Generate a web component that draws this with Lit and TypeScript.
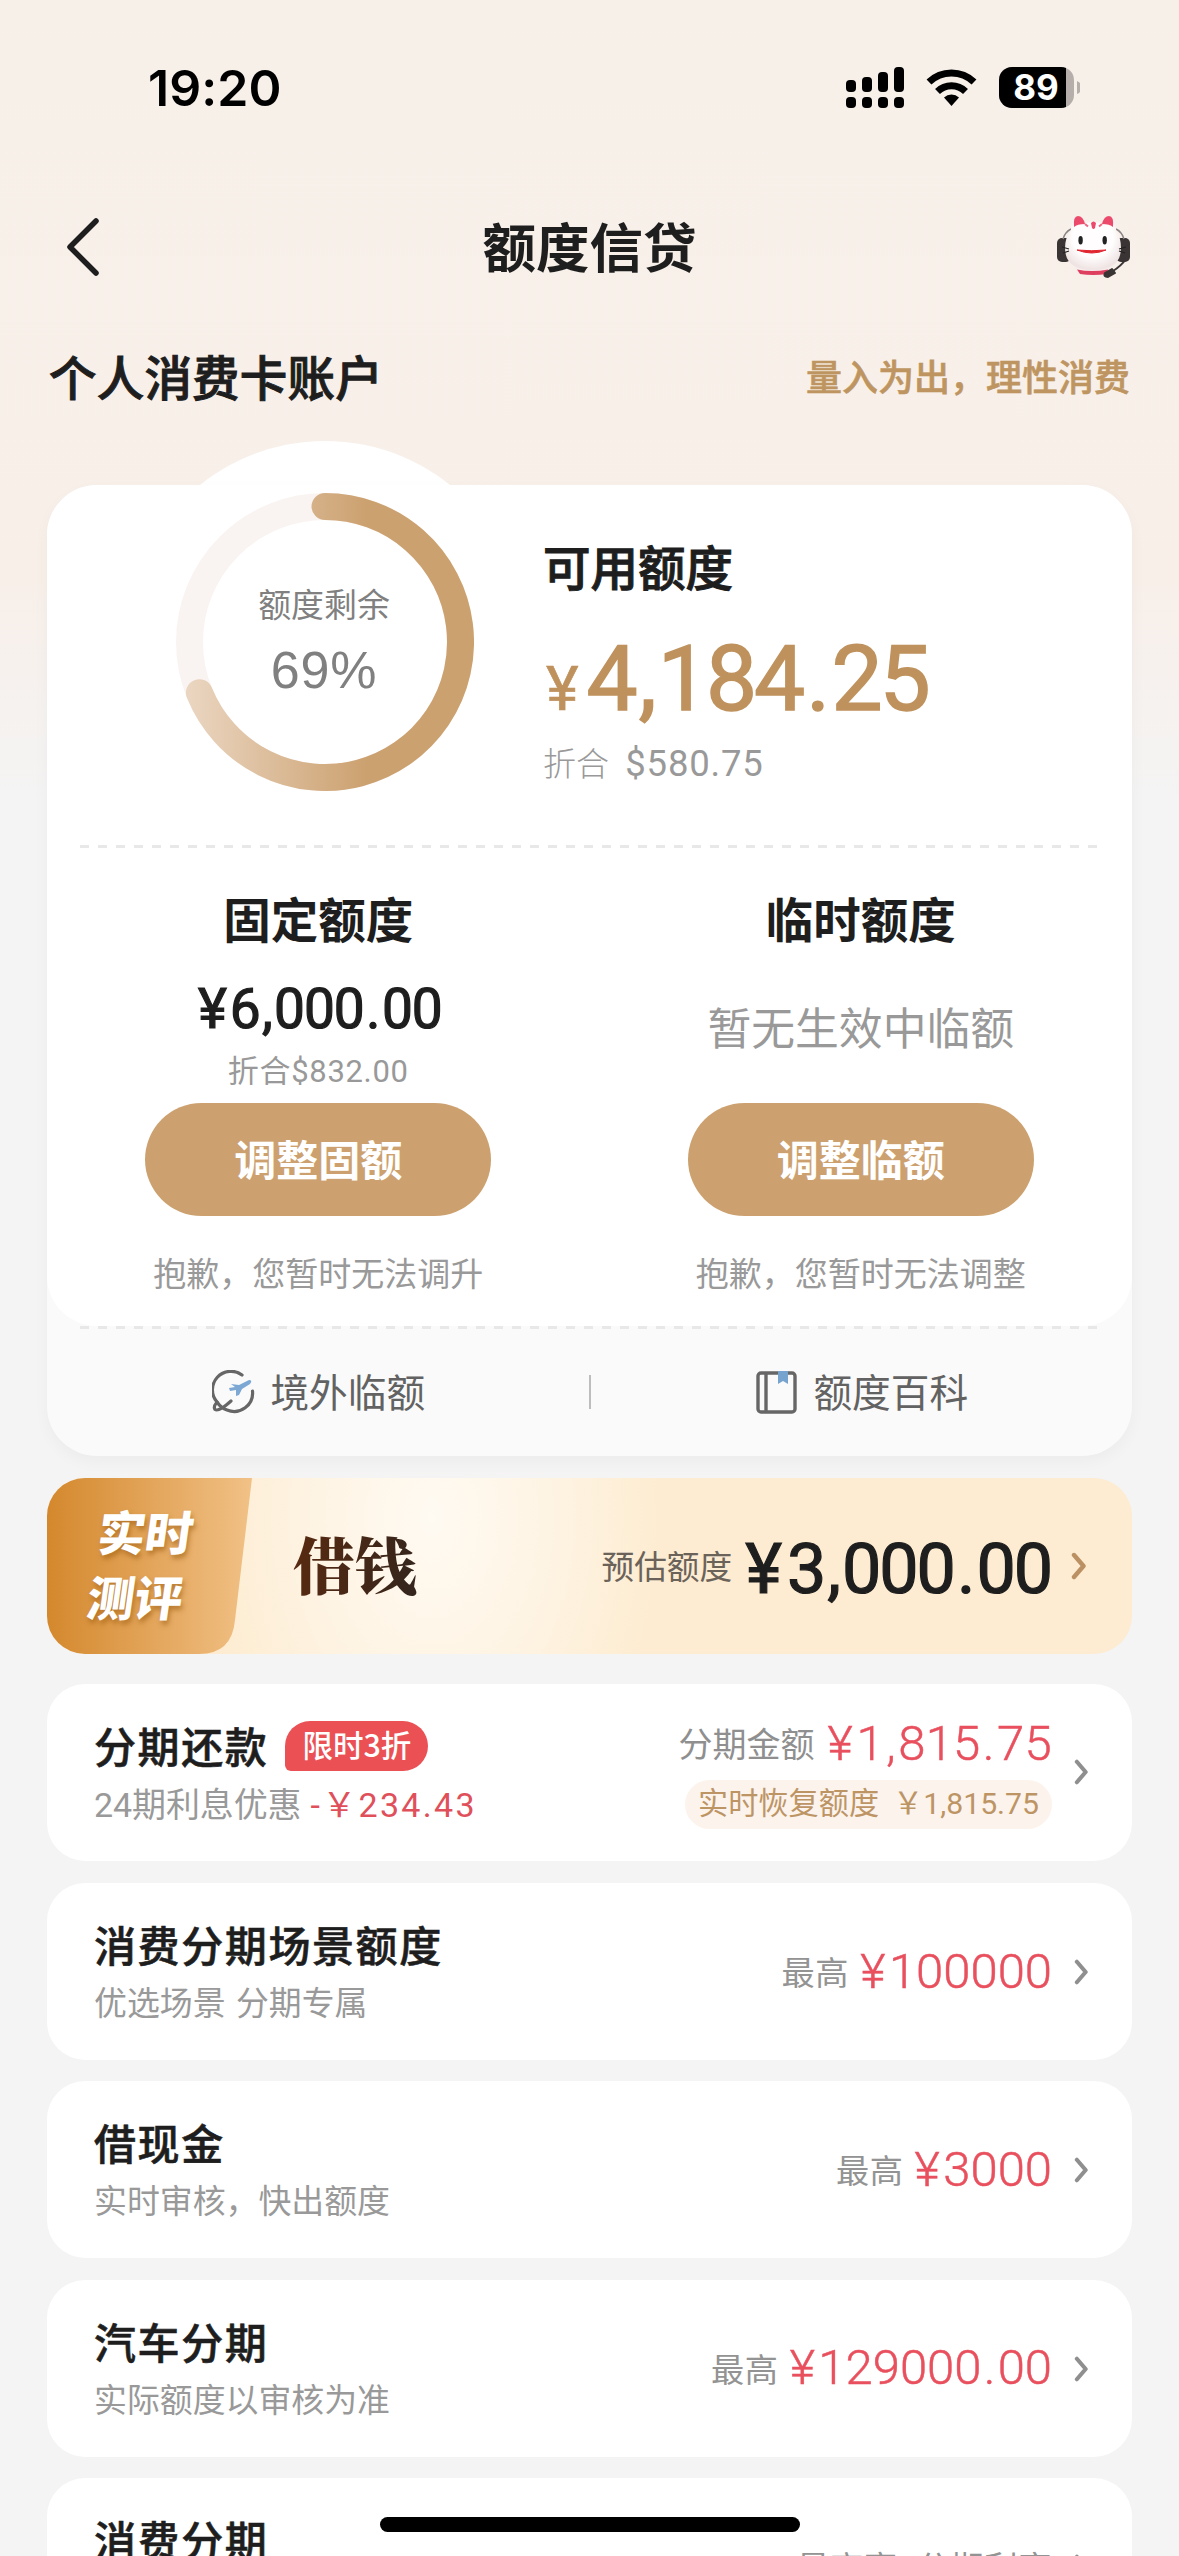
import { LitElement, html, css } from "lit";
import { customElement, property } from "lit/decorators.js";

const chevron = html`<svg viewBox="0 0 16 28" width="16" height="28" fill="none" stroke="currentColor" stroke-width="4.400" stroke-linecap="round" stroke-linejoin="round"><path d="M3 3l9.500 11L3 25" /></svg>`;

/* Amounts: punctuation gets its own box so it can be spaced apart from the digits. */
const money = (value: string) =>
  [...value].map((c) => (c === "," || c === "." ? html`<i class="p">${c}</i>` : c === "¥" ? html`<i class="y">¥</i>` : c));

const amountStyles = css`
  i { font-style: normal; }
  .p { margin: 0 .045em; }
  .y { margin-right: .07em; }
`;

@customElement("offer-row")
class OfferRow extends LitElement {
  @property() name = "";
  @property() note = "";
  @property() lead = "";
  @property() amount = "";

  static styles = [amountStyles, css`
    :host { display: flex; box-sizing: border-box; height: 177px; margin-bottom: 21.400px; padding: 0 43px 0 47px; background: #fff; border-radius: 38px; align-items: flex-start; }
    svg { display: block; }
    .left { flex: 1; padding-top: 33px; }
    .name { font-size: 42px; letter-spacing: 1.600px; font-weight: 500; -webkit-text-stroke: .6px currentColor; line-height: 56px; color: #1e1e1e; white-space: nowrap; }
    .note { font-size: 32.900px; word-spacing: 3px; line-height: 48px; margin-top: 5px; color: #999; white-space: nowrap; }
    .right { display: flex; align-items: center; height: 177px; white-space: nowrap; }
    .lead { font-size: 33.200px; letter-spacing: .6px; line-height: 48px; color: #939393; padding-bottom: 1px; }
    .amount { font: 300 49px/60px Roboto, "Noto Sans CJK SC", sans-serif; -webkit-text-stroke: .5px currentColor; color: #e9505e; margin-left: 11px; }
    .arrow { color: #8f8f8f; margin: 76px 0 0 22px; height: 26px; }
    .arrow svg { width: 15px; height: 26px; }
  `];

  render() {
    return html`
      <div class="left">
        <div class="name">${this.name}</div>
        <div class="note">${this.note}</div>
      </div>
      <div class="right">
        <span class="lead">${this.lead}</span>
        ${this.amount ? html`<span class="amount">${money(this.amount)}</span>` : ""}
      </div>
      <div class="arrow">${chevron}</div>
    `;
  }
}

@customElement("app-root")
class AppRoot extends LitElement {
  static styles = [amountStyles, css`
    :host { display: block; width: 1179px; height: 2556px; overflow: hidden; position: relative; font-family: "Noto Sans CJK SC", sans-serif; color: #1e1e1e; background: linear-gradient(180deg, #f7f0e9 0, #f8efe9 580px, #f4f4f4 800px); white-space: nowrap; }
    svg { display: block; }
    .status { display: flex; height: 176px; box-sizing: border-box; padding: 60px 99px 0 148px; }
    .time { flex: 1; font: 600 50px/56px Inter, sans-serif; letter-spacing: .1px; color: #000; }
    .nav { display: grid; grid-template-columns: 200px 1fr 200px; height: 142px; align-items: center; }
    .nav .back { padding-left: 65px; }
    .nav h1 { margin: 0; padding-bottom: 5px; text-align: center; font-size: 53.500px; font-weight: 700; line-height: 60px; }
    .nav .cat { justify-self: end; margin-right: 46px; }
    .account { display: flex; justify-content: space-between; align-items: center; height: 114px; padding: 0 49px 0 49px; }
    .account h2 { margin: 0; font-size: 47.500px; letter-spacing: .2px; font-weight: 500; -webkit-text-stroke: 1px currentColor; }
    .account span { font-size: 36px; font-weight: 500; -webkit-text-stroke: .6px currentColor; color: #be9561; }
    .bump { position: absolute; left: 125px; top: 441px; width: 400px; height: 400px; border-radius: 50%; background: #fff; }
    .card { position: relative; margin: 53px 47px 0; height: 971px; border-radius: 50px; background: #fafafa; box-shadow: 0 6px 16px rgba(0,0,0,.035); }
    .white { position: relative; height: 841px; border-radius: 50px; background: #fff; }
    .summary { display: flex; height: 360px; }
    .ring { display: grid; margin: 8px 0 0 129px; width: 298px; height: 298px; }
    .ring > * { grid-area: 1 / 1; }
    .ringtext { text-align: center; padding: 83px 2px 0 0; color: #808080; }
    .ringtext .a { font-size: 32.900px; line-height: 54px; }
    .ringtext .b { font: 400 52px/70px "Liberation Sans", sans-serif; letter-spacing: .8px; margin-top: 5px; }
    .avail { padding: 51px 0 0 69px; }
    .avail .t { font-size: 47.500px; font-weight: 500; -webkit-text-stroke: 1px currentColor; line-height: 60px; }
    .avail .m { font: 400 91px/100px Roboto, sans-serif; -webkit-text-stroke: 1.500px currentColor; color: #bf925d; margin-top: 33px; height: 96px; letter-spacing: -.033em; }
    .avail .m .y { font-size: 62px; margin: 0 8px 0 3px; letter-spacing: 0; -webkit-text-stroke-width: .6px; }
    .avail .c { font-size: 33px; font-weight: 300; color: #999; line-height: 44px; margin-top: 15px; }
    .avail .c b { font: 400 36.500px Roboto, sans-serif; margin-left: 9px; letter-spacing: .8px; }
    .dash { height: 3px; margin: 0 33px; background: repeating-linear-gradient(90deg, #e8e8e8 0 9px, transparent 9px 18px); }
    .cols { display: grid; grid-template-columns: 1fr 1fr; }
    .col { display: flex; flex-direction: column; align-items: center; padding: 40px 0 0; }
    .col .t { font-size: 47.500px; font-weight: 700; line-height: 60px; }
    .col .m { font: 400 55px/70px Roboto, sans-serif; -webkit-text-stroke: 1.200px currentColor; letter-spacing: -.02em; margin-top: 26px; height: 67px; padding-left: 3px; }
    .col .c { font: 400 31px/54px Roboto, "Noto Sans CJK SC", sans-serif; letter-spacing: .7px; color: #999; height: 62px; box-sizing: border-box; padding-top: 4px; }
    .col .none { font-size: 43.800px; color: #999; line-height: 60px; height: 155px; box-sizing: border-box; padding-top: 48px; }
    .btn { width: 346px; height: 113px; border-radius: 57px; background: #cca16f; color: #fff; font-size: 42px; font-weight: 700; line-height: 109px; text-align: center; }
    .col .n { font-size: 33px; color: #999; line-height: 50px; margin-top: 31px; }
    .links { display: grid; grid-template-columns: 1fr 2px 1fr; align-items: center; height: 130px; color: #626262; font-size: 38.700px; }
    .links div { display: flex; align-items: center; justify-content: center; gap: 15px; height: 60px; line-height: 52px; padding: 0 0 5px 2px; }
    .links span { padding-bottom: 4px; }
    .links i { height: 34px; background: #bdbdbd; margin-bottom: 5px; }
    .banner { display: flex; align-items: center; margin: 22px 47px 30px; height: 176px; border-radius: 38px; overflow: hidden; background: radial-gradient(ellipse 230px 340px at 385px 40px, #fffaf2 0, #fef4e4 50%, rgba(253,237,210,0) 100%), #fdecd1; }
    .tag { position: relative; width: 205px; height: 176px; flex: none; }
    .tag p { position: relative; margin: 0; color: #fff; font-size: 47.500px; font-weight: 900; line-height: 65px; transform: skewX(-8deg); text-shadow: 2px 4px 5px rgba(150,85,10,.55); }
    .tag svg { position: absolute; left: 0; top: 0; }
    .tag .p1 { padding: 20px 0 0 53px; }
    .tag .p2 { padding: 0 0 0 41px; }
    .loan { margin: 0 0 4px 41px; font: 900 62px/80px "Noto Serif CJK SC", "Noto Serif SC", "Source Han Serif SC", serif; color: transparent; background: linear-gradient(100deg, #5a2a10, #33251d); -webkit-background-clip: text; background-clip: text; }
    .est { flex: 1; display: flex; align-items: center; justify-content: flex-end; font-size: 32.700px; color: #6b635a; }
    .est span { padding-bottom: 3px; }
    .est b { font: 400 70px/80px Roboto, sans-serif; -webkit-text-stroke: 1.200px currentColor; letter-spacing: -.03em; color: #1e1e1e; margin: 5px 0 0 13px; }
    .est .y { margin-right: .1em; }
    .banner .arr { color: #bb9062; margin: 0 45px 0 20px; }
    .repay { display: flex; margin: 0 47px 22px; height: 177px; box-sizing: border-box; padding: 0 43px 0 47px; background: #fff; border-radius: 38px; }
    .repay .l { flex: 1; padding-top: 36px; }
    .repay .h { display: flex; align-items: center; height: 52px; }
    .repay .h > span { font-size: 42px; line-height: 52px; letter-spacing: 1.600px; font-weight: 500; -webkit-text-stroke: .6px currentColor; padding-bottom: 3px; }
    .repay .badge { margin-left: 17px; height: 50px; line-height: 47px; padding: 0 17px; border-radius: 25px 25px 25px 6px; background: #ea5054; color: #fff; font-size: 30.500px; font-weight: 500; }
    .repay .s { font: 400 34px/50px Roboto, "Noto Sans CJK SC", sans-serif; letter-spacing: -.1px; color: #999; margin-top: 8px; }
    .repay .s em { font-style: normal; color: #e0505a; margin-left: 9px; letter-spacing: 2.300px; }
    .repay .r { display: flex; flex-direction: column; align-items: flex-end; padding-top: 30px; }
    .repay .x { display: flex; align-items: center; height: 60px; margin-bottom: 6px; font-size: 34px; color: #8f8f8f; }
    .repay .x span { padding-bottom: 4px; }
    .repay .x b { font: 300 49px/60px Roboto, sans-serif; -webkit-text-stroke: .5px currentColor; color: #e9505e; margin-left: 13px; letter-spacing: .3px; }
    .pill { height: 49px; padding: 0 13px; border-radius: 25px; background: #fcf3ed; color: #bd9565; font: 400 30.200px/48px Roboto, "Noto Sans CJK SC", sans-serif; }
    .pill span { margin-left: 14px; }
    .repay .arr { color: #8f8f8f; margin: 75px 0 0 22px; }
    .repay .arr svg { width: 15px; height: 26px; }
    .list { margin: 0 47px; }
    .home { position: absolute; left: 380px; top: 2517px; width: 420px; height: 15px; border-radius: 8px; background: #000; }
  `];

  render() {
    return html`
      <div class="status">
        <div class="time">19:20</div>
        <svg width="240" height="56" viewBox="840 60 240 56">
          <g fill="#000">
            <rect x="846" y="80" width="10" height="12" rx="4" /><rect x="862" y="77" width="10" height="15" rx="4" /><rect x="878" y="72" width="10" height="20" rx="4" /><rect x="894" y="67" width="10" height="25" rx="4" />
            <rect x="846" y="97" width="10" height="11" rx="4" /><rect x="862" y="97" width="10" height="11" rx="4" /><rect x="878" y="97" width="10" height="11" rx="4" /><rect x="894" y="97" width="10" height="11" rx="4" />
            <path d="M951.500 106l-7.500-8.500a11 11 0 0 1 15 0z" />
          </g>
          <g fill="none" stroke="#000" stroke-width="7"><path d="M929 82a32.500 32.500 0 0 1 45 0" /><path d="M937.500 91.500a20 20 0 0 1 28 0" /></g>
          <clipPath id="bat"><rect x="999" y="67" width="75" height="41" rx="13" /></clipPath>
          <g clip-path="url(#bat)"><rect x="999" y="67" width="75" height="41" fill="#b5aeaa" /><rect x="999" y="67" width="67" height="41" fill="#000" /></g>
          <path d="M1077 81a7 7 0 0 1 0 13z" fill="#b5aeaa" />
          <text x="1036" y="100" font-family="Inter, sans-serif" font-weight="700" font-size="35" fill="#fff" text-anchor="middle">89</text>
        </svg>
      </div>
      <div class="nav">
        <div class="back"><svg width="36" height="60" viewBox="0 0 36 60" fill="none" stroke="#1e1e1e" stroke-width="5.500" stroke-linecap="round" stroke-linejoin="round"><path d="M31 4L5 30l26 26" /></svg></div>
        <h1>额度信贷</h1>
        <svg class="cat" width="78" height="68" viewBox="0 0 78 68">
          <defs><radialGradient id="face" cx=".5" cy=".4" r=".6"><stop offset=".6" stop-color="#fffdfd" /><stop offset="1" stop-color="#efe3e3" /></radialGradient></defs>
          <rect x="2" y="25" width="14" height="24" rx="5" fill="#3a3435" /><rect x="61" y="25" width="14" height="24" rx="5" fill="#3a3435" />
          <path d="M8 26Q10 19 16 16M69 26Q67 19 61 16" fill="none" stroke="#8a8384" stroke-width="1.500" />
          <path d="M20 54h35l-1 6q-16 5-32 0z" fill="#f6eded" />
          <path d="M38 9q7 0 12 2 2-8 5-8 5 0 6 14 5 8 5 18 0 22-28 22T10 35q0-10 6-18Q16 3 22 3q4 0 6 8 5-2 10-2z" fill="url(#face)" />
          <path d="M19 14Q18 3 23 3q5 0 7 8-8 0-11 3zM58 14Q59 3 54 3q-5 0-7 8 8 0 11 3z" fill="#ec4a6b" />
          <path d="M36 10q2.500-3 5 0l-1 5q-1.500 2-3 0z" fill="#ec4a6b" />
          <path d="M30 11l3 2.500M47 11l-3 2.500" stroke="#ec6a85" stroke-width="2" />
          <path d="M22 56.500q15 3 31 0l-1 4.500q-14 2-27 0z" fill="#df3f5f" />
          <ellipse cx="25.600" cy="27.300" rx="2.200" ry="4.200" fill="#222" /><ellipse cx="49.700" cy="27.300" rx="2.200" ry="4.200" fill="#222" />
          <path d="M22 37q15 1.500 29 0-14 6-29 0z" fill="#e0252f" stroke="#e0252f" />
          <path d="M7 34l7 2M8 40l6-2M71 34l-7 2M70 40l-6-2" stroke="#222" stroke-width="1.200" />
          <path d="M71 46q-5 7-13 12" fill="none" stroke="#3a3435" stroke-width="2" /><path d="M50 60l7-4 3 4-7 4q-5 0-3-4z" fill="#3a3435" stroke="#3a3435" stroke-width="2" stroke-linejoin="round" />
        </svg>
      </div>
      <div class="account"><h2>个人消费卡账户</h2><span>量入为出，理性消费</span></div>
      <div class="bump"></div>
      <div class="card">
        <div class="white">
          <div class="summary">
            <div class="ring">
              <svg width="298" height="298" viewBox="0 0 298 298" fill="none" stroke-width="27">
                <defs><linearGradient id="g" gradientUnits="userSpaceOnUse" x1="14" y1="0" x2="190" y2="0"><stop offset="0" stop-color="#ead5c0" /><stop offset="1" stop-color="#cca170" /></linearGradient></defs>
                <circle cx="149" cy="149" r="135.500" stroke="#f9f4f1" />
                <path d="M149 13.500A135.500 135.500 0 1 1 23.400 199.800" stroke="url(#g)" stroke-linecap="round" />
              </svg>
              <div class="ringtext"><div class="a">额度剩余</div><div class="b">69%</div></div>
            </div>
            <div class="avail">
              <div class="t">可用额度</div>
              <div class="m">${money("¥4,184.25")}</div>
              <div class="c">折合 <b>$580.75</b></div>
            </div>
          </div>
          <div class="dash"></div>
          <div class="cols">
            <div class="col"><div class="t">固定额度</div><div class="m">${money("¥6,000.00")}</div><div class="c">折合$832.00</div><div class="btn">调整固额</div><div class="n">抱歉，您暂时无法调升</div></div>
            <div class="col"><div class="t">临时额度</div><div class="none">暂无生效中临额</div><div class="btn">调整临额</div><div class="n">抱歉，您暂时无法调整</div></div>
          </div>
        </div>
        <div class="dash"></div>
        <div class="links">
          <div>
            <svg width="43" height="44" viewBox="0 0 43 44" fill="none" stroke="#666" stroke-width="3.200" stroke-linecap="round" stroke-linejoin="round"><path d="M30 5A18.500 18.500 0 0 0 5 32Q1 37 3 39.500 7 42 19 31" /><path d="M5 32Q9 38 15 40A18.500 18.500 0 0 0 40.500 21" /><path d="M19 14l8 1 10-5q4 0 1 4l-8 5-3 6-3 1v-6l-6 1-1-3 6-1z" fill="#7ea8d4" stroke="none" /></svg>
            <span>境外临额</span>
          </div>
          <i></i>
          <div>
            <svg width="42" height="44" viewBox="0 0 42 44" fill="none" stroke="#666" stroke-width="3.400"><rect x="2" y="3" width="37" height="39" rx="3" /><path d="M10 3v39" /><path d="M22 1h10v13l-5-3-5 3z" fill="#76a4cf" stroke="none" /></svg>
            <span>额度百科</span>
          </div>
        </div>
      </div>
      <div class="banner">
        <div class="tag">
          <svg width="205" height="176" viewBox="0 0 205 176"><defs><linearGradient id="t" x1="0" y1="0" x2="1" y2="0"><stop offset="0" stop-color="#d4882d" /><stop offset="1" stop-color="#f1c186" /></linearGradient></defs><path d="M0 0h205l-17 142q-3 34-36 34H0z" fill="url(#t)" /></svg>
          <p class="p1">实时</p><p class="p2">测评</p>
        </div>
        <div class="loan">借钱</div>
        <div class="est"><span>预估额度</span><b>${money("¥3,000.00")}</b></div>
        <div class="arr">${chevron}</div>
      </div>
      <div class="repay">
        <div class="l">
          <div class="h"><span>分期还款</span><div class="badge">限时3折</div></div>
          <div class="s">24期利息优惠<em>-￥234.43</em></div>
        </div>
        <div class="r">
          <div class="x"><span>分期金额</span><b>${money("¥1,815.75")}</b></div>
          <div class="pill">实时恢复额度<span>￥1,815.75</span></div>
        </div>
        <div class="arr">${chevron}</div>
      </div>
      <div class="list">
        <offer-row name="消费分期场景额度" note="优选场景 分期专属" lead="最高" amount="¥100000"></offer-row>
        <offer-row name="借现金" note="实时审核，快出额度" lead="最高" amount="¥3000"></offer-row>
        <offer-row name="汽车分期" note="实际额度以审核为准" lead="最高" amount="¥129000.00"></offer-row>
        <offer-row name="消费分期" note="" lead="最高享3分期利率" amount=""></offer-row>
      </div>
      <div class="home"></div>
    `;
  }
}
